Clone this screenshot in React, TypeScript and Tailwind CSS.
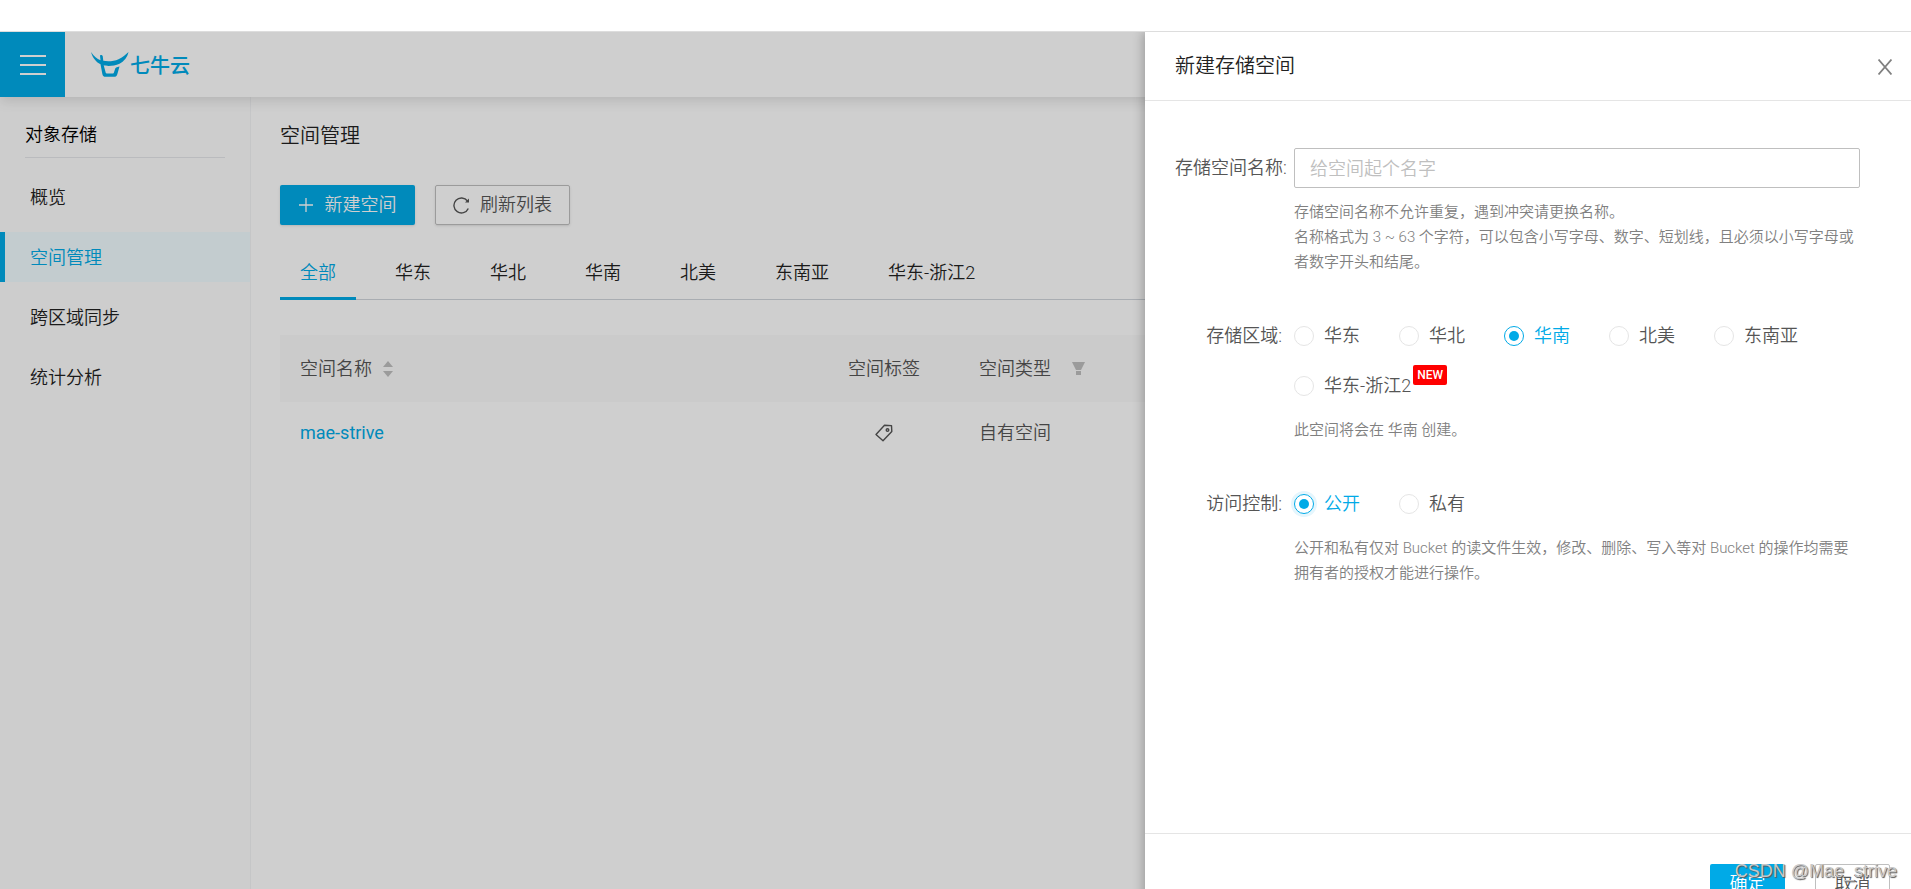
import React, { useState } from 'react';

const menuItems = ['概览', '空间管理', '跨区域同步', '统计分析'];
const tabs = ['全部', '华东', '华北', '华南', '北美', '东南亚', '华东-浙江2'];
const regions = [
  { name: '华东' },
  { name: '华北' },
  { name: '华南' },
  { name: '北美' },
  { name: '东南亚' },
  { name: '华东-浙江2', isNew: true }
];

const Logo: React.FC = () => (
  <a href="#" className="ml-[26px] flex items-center text-[#00aae7]">
    <svg width="38" height="26" viewBox="0 0 38 26" fill="currentColor">
      <path d="M0 0C3 4.500 6 7 9.500 8.200L9 3.500C9 2.500 11.500 2.800 11.700 4L12.300 8.800C17 9.600 23 9.300 27.500 7.200C31.500 5.300 34.500 3 37.500 0C36.500 5 33 9.500 28.500 11.700C23 14.200 16 14.300 12.700 13.300L14.600 20.300C14.900 21.300 15.300 21.600 16.200 21.600H21.400C22.300 21.600 22.800 21.300 23 20.300L24 17.200C24.300 15.900 25.500 15 28.500 14.500L26.300 22.200C25.700 24.200 24.800 24.800 23 24.800H14.700C12.800 24.800 11.900 24.100 11.400 22.200L9.500 12.200C4.800 10 1.500 5.500 0 0Z" />
    </svg>
    <span className="ml-px pt-0.5 text-xl font-medium">七牛云</span>
  </a>
);

const Sidebar: React.FC = () => (
  <aside className="w-[251px] shrink-0 border-r border-gray-100 bg-[#fdfdfd]">
    <h2 className="mx-[25px] border-b border-gray-200 pt-6 pb-2 text-lg leading-7 text-black">对象存储</h2>
    <nav className="mt-3.5 flex flex-col gap-2.5">
      {menuItems.map((item) => (
        <a
          key={item}
          href="#"
          className={
            item === '空间管理'
              ? 'border-l-[5px] border-[#00aae7] bg-[#f0fcff] pt-0.5 pl-[25px] text-lg leading-12 text-[#00aae7]'
              : 'border-l-[5px] border-transparent pt-0.5 pl-[25px] text-lg leading-12 text-[#222]'
          }
        >
          {item}
        </a>
      ))}
    </nav>
  </aside>
);

const BucketTable: React.FC = () => (
  <table className="mt-[35px] w-full table-fixed text-left text-lg text-[#555]">
    <colgroup>
      <col className="w-[529px]" />
      <col className="w-[150px]" />
      <col className="w-[150px]" />
      <col />
    </colgroup>
    <thead className="bg-[#fafafa]">
      <tr className="h-[67px]">
        <th className="px-5 font-[350]">
          <span className="flex items-center gap-[11px]">
            空间名称
            <svg width="10" height="16" viewBox="0 0 10 16" fill="#bfbfbf">
              <path d="M5 0L10 6H0ZM5 16L10 10H0Z" />
            </svg>
          </span>
        </th>
        <th className="text-center font-[350]">空间标签</th>
        <th className="pl-5 font-[350]">
          <span className="flex items-center gap-[21px]">
            空间类型
            <svg width="13" height="13" viewBox="0 0 13 13" fill="#bfbfbf">
              <path d="M0 0H13L9 8H4ZM4 9H9V13H4Z" />
            </svg>
          </span>
        </th>
        <th></th>
      </tr>
    </thead>
    <tbody>
      <tr className="h-[62px]">
        <td className="px-5">
          <a href="#" className="font-normal text-[#00aae7]">mae-strive</a>
        </td>
        <td>
          <svg className="mx-auto" width="18" height="18" viewBox="0 0 18 18" fill="none" stroke="#555" strokeWidth="1.400">
            <path d="M1 10.500L9.500 1.300L16.500 1.600L16.800 7.500L8 16.800Z" strokeLinejoin="round" />
            <circle cx="12.500" cy="6" r="1.300" />
          </svg>
        </td>
        <td className="pl-5">自有空间</td>
        <td></td>
      </tr>
    </tbody>
  </table>
);

const Main: React.FC = () => (
  <main className="min-w-0 flex-1 pt-6 pl-[29px]">
    <h1 className="text-xl leading-[30px] text-[#222]">空间管理</h1>
    <div className="mt-[34px] flex gap-5">
      <button className="flex h-10 w-[135px] items-center justify-center gap-3 rounded-xs bg-[#00aae7] text-lg text-white shadow-sm">
        <svg width="14" height="14" viewBox="0 0 14 14" stroke="currentColor" strokeWidth="1.300">
          <path d="M7 0V14M0 7H14" />
        </svg>
        新建空间
      </button>
      <button className="flex h-10 w-[135px] items-center justify-center gap-2.5 rounded-xs border border-[#bfbfbf] text-lg text-[#555] shadow-sm">
        <svg width="17" height="17" viewBox="0 0 17 17" fill="none" stroke="currentColor" strokeWidth="1.400">
          <path d="M15.300 11.500A7.500 7.500 0 1 1 14.500 4" />
          <path d="M16 1.500V5.500H12Z" fill="currentColor" stroke="none" />
        </svg>
        刷新列表
      </button>
    </div>
    <div className="mt-5 flex gap-[19px] border-b border-gray-300">
      {tabs.map((tab) => (
        <button
          key={tab}
          className={
            tab === '全部'
              ? '-mb-px border-b-[3px] border-[#00aae7] px-5 pt-1 text-lg leading-12 text-[#00aae7]'
              : '-mb-px border-b-[3px] border-transparent px-5 pt-1 text-lg leading-12 text-[#222]'
          }
        >
          {tab}
        </button>
      ))}
    </div>
    <BucketTable />
  </main>
);

const radioClass =
  "flex size-5 shrink-0 appearance-none items-center justify-center rounded-full border border-[#e5e5e5] before:size-2.5 before:rounded-full checked:border-[#00aae7] checked:before:bg-[#00aae7]";

const Drawer: React.FC = () => {
  const [region, setRegion] = useState('华南');
  const [access, setAccess] = useState('公开');

  return (
    <section className="absolute inset-y-0 right-0 flex w-[766px] flex-col bg-white shadow-[-2px_0_10px_rgba(0,0,0,0.25)]">
      <header className="flex items-center justify-between border-b border-[#e5e5e5] pr-[19px] pl-[30px]">
        <h2 className="text-xl leading-[68px] text-[#222]">新建存储空间</h2>
        <button aria-label="关闭" className="pt-0.5">
          <svg width="14" height="16" viewBox="0 0 14 16" stroke="#808080" strokeWidth="1.800">
            <path d="M.5 .5L13.500 15.500M13.500 .5L.5 15.500" />
          </svg>
        </button>
      </header>

      <form className="flex-1 pt-[47px] pr-[51px] pl-[30px] text-lg text-[#555]">
        <div className="grid grid-cols-[119px_1fr]">
          <label htmlFor="bucket-name" className="leading-10">存储空间名称:</label>
          <div>
            <input
              id="bucket-name"
              placeholder="给空间起个名字"
              className="h-10 w-full rounded-xs border border-[#bfbfbf] px-[15px] placeholder:text-[#bfbfbf]"
            />
            <p className="mt-3 text-[15px] leading-[25px] text-[#808080]">存储空间名称不允许重复，遇到冲突请更换名称。</p>
            <p className="text-[15px] leading-[25px] text-[#808080]">
              名称格式为 3 ~ 63 个字符，可以包含小写字母、数字、短划线，且必须以小写字母或者数字开头和结尾。
            </p>
          </div>
        </div>

        <fieldset className="mt-9 grid grid-cols-[119px_1fr]">
          <span className="pr-3 text-right leading-[50px]">存储区域:</span>
          <div>
            <div className="grid grid-cols-[repeat(5,105px)]">
              {regions.map(({ name, isNew }) => (
                <label key={name} className="flex h-[50px] items-center gap-2.5 whitespace-nowrap has-checked:text-[#00aae7]">
                  <input type="radio" name="region" className={radioClass} checked={region === name} onChange={() => setRegion(name)} />
                  <span className="relative">
                    {name}
                    {isNew && (
                      <span className="absolute -top-[7px] left-full ml-0.5 rounded-xs bg-[#ff0000] px-1 text-xs leading-5 font-medium text-white">NEW</span>
                    )}
                  </span>
                </label>
              ))}
            </div>
            <p className="mt-[7px] text-[15px] leading-[25px] text-[#808080]">此空间将会在 {region} 创建。</p>
          </div>
        </fieldset>

        <fieldset className="mt-9 grid grid-cols-[119px_1fr]">
          <span className="pr-3 text-right leading-[50px]">访问控制:</span>
          <div>
            <div className="grid grid-cols-[repeat(5,105px)]">
              {['公开', '私有'].map((name) => (
                <label key={name} className="flex h-[50px] items-center gap-2.5 has-checked:text-[#00aae7]">
                  <input
                    type="radio"
                    name="access"
                    className={radioClass + ' checked:ring-3 checked:ring-[#e5f6fd]'}
                    checked={access === name}
                    onChange={() => setAccess(name)}
                  />
                  {name}
                </label>
              ))}
            </div>
            <p className="mt-[7px] text-[15px] leading-[25px] text-[#808080]">
              公开和私有仅对 Bucket 的读文件生效，修改、删除、写入等对 Bucket 的操作均需要拥有者的授权才能进行操作。
            </p>
          </div>
        </fieldset>
      </form>

      <footer className="flex justify-end gap-[30px] border-t border-[#e5e5e5] pt-[30px] pr-[21px] pb-[17px] text-lg">
        <button className="h-10 w-[75px] rounded-xs bg-[#00aae7] text-white">确定</button>
        <button className="h-10 w-[75px] rounded-xs border border-[#bfbfbf] text-[#555]">取消</button>
      </footer>
    </section>
  );
};

const App: React.FC = () => {
  return (
    <div className="relative flex h-screen flex-col overflow-hidden bg-white font-['Roboto','Noto_Sans_CJK_SC',sans-serif] font-[350]">
      <div className="h-8 shrink-0 border-b border-[#ddd]" />
      <div className="relative flex h-screen shrink-0 flex-col overflow-hidden">
        <header className="z-10 flex h-[65px] shrink-0 bg-white shadow-[0_4px_12px_rgba(0,0,0,0.12)]">
          <button aria-label="菜单" className="flex w-[65px] items-center justify-center bg-[#00aae7] text-white">
            <svg width="26" height="20" viewBox="0 0 26 20" stroke="currentColor" strokeWidth="2">
              <path d="M0 1H26M0 10H26M0 19H26" />
            </svg>
          </button>
          <Logo />
        </header>
        <div className="flex flex-1">
          <Sidebar />
          <Main />
        </div>
        <div className="absolute inset-0 z-20 bg-black/19">
          <Drawer />
        </div>
      </div>
      <span className="absolute right-3.5 bottom-1 z-30 font-['Liberation_Sans',sans-serif] text-lg leading-7 font-normal text-[#c8c8c8] [text-shadow:1px_1px_1px_#555]">
        CSDN @Mae_strive
      </span>
    </div>
  );
};

export default App;
